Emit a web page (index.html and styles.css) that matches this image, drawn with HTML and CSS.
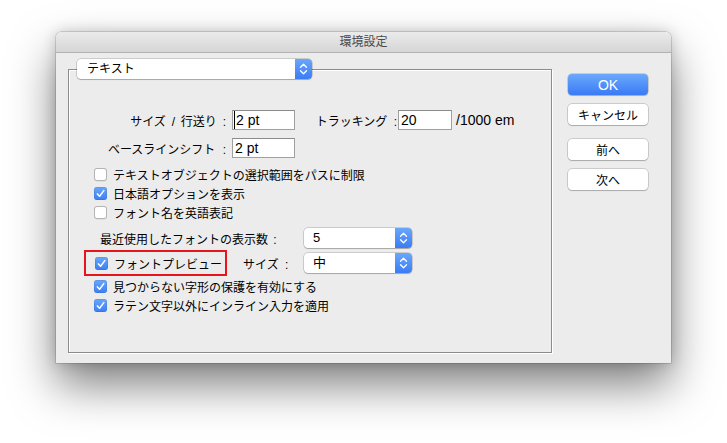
FILE: index.html
```html
<!DOCTYPE html>
<html lang="ja">
<head>
<meta charset="utf-8">
<title>環境設定</title>
<link rel="stylesheet" href="styles.css">
</head>
<body>
<div class="window">
  <div class="titlebar">環境設定</div>
  <div class="body">
    <fieldset class="group">
      <legend class="popup legend-popup">
        <span class="popup-label">テキスト</span>
        <span class="popup-arrows"><svg width="17" height="20" viewBox="0 0 17 20"><path d="M5.5 8.2 L8.5 5.2 L11.5 8.2 M5.5 11.8 L8.5 14.8 L11.5 11.8" fill="none" stroke="#fff" stroke-width="1.3" stroke-linecap="round" stroke-linejoin="round"/></svg></span>
      </legend>
      <div class="field-row first">
        <span class="flabel wide-spaces">サイズ / 行送り :</span>
        <span class="tf caret">2 pt</span>
        <span class="flabel2">トラッキング :</span>
        <span class="tf tf-narrow">20</span>
        <span class="unit">/1000 em</span>
      </div>
      <div class="field-row second">
        <span class="flabel">ベースラインシフト :</span>
        <span class="tf">2 pt</span>
      </div>
      <div class="checks">
        <div class="check-row"><span class="cb"></span>テキストオブジェクトの選択範囲をパスに制限</div>
        <div class="check-row"><span class="cb on"><svg width="13" height="13" viewBox="0 0 13 13"><path d="M3.4 6.9 L5.6 9.3 L9.8 3.6" fill="none" stroke="#fff" stroke-width="1.5" stroke-linecap="round" stroke-linejoin="round"/></svg></span>日本語オプションを表示</div>
        <div class="check-row"><span class="cb"></span>フォント名を英語表記</div>
      </div>
      <div class="sel-row recent">
        <span class="recent-label">最近使用したフォントの表示数 :</span>
        <span class="popup sel">
          <span class="popup-label sel-label">5</span>
          <span class="popup-arrows"><svg width="17" height="20" viewBox="0 0 17 20"><path d="M5.5 8.2 L8.5 5.2 L11.5 8.2 M5.5 11.8 L8.5 14.8 L11.5 11.8" fill="none" stroke="#fff" stroke-width="1.3" stroke-linecap="round" stroke-linejoin="round"/></svg></span>
        </span>
      </div>
      <div class="sel-row preview">
        <span class="highlight"><span class="cb on"><svg width="13" height="13" viewBox="0 0 13 13"><path d="M3.4 6.9 L5.6 9.3 L9.8 3.6" fill="none" stroke="#fff" stroke-width="1.5" stroke-linecap="round" stroke-linejoin="round"/></svg></span>フォントプレビュー</span>
        <span class="size-label">サイズ :</span>
        <span class="popup sel">
          <span class="popup-label sel-label">中</span>
          <span class="popup-arrows"><svg width="17" height="20" viewBox="0 0 17 20"><path d="M5.5 8.2 L8.5 5.2 L11.5 8.2 M5.5 11.8 L8.5 14.8 L11.5 11.8" fill="none" stroke="#fff" stroke-width="1.3" stroke-linecap="round" stroke-linejoin="round"/></svg></span>
        </span>
      </div>
      <div class="checks last">
        <div class="check-row"><span class="cb on"><svg width="13" height="13" viewBox="0 0 13 13"><path d="M3.4 6.9 L5.6 9.3 L9.8 3.6" fill="none" stroke="#fff" stroke-width="1.5" stroke-linecap="round" stroke-linejoin="round"/></svg></span>見つからない字形の保護を有効にする</div>
        <div class="check-row"><span class="cb on"><svg width="13" height="13" viewBox="0 0 13 13"><path d="M3.4 6.9 L5.6 9.3 L9.8 3.6" fill="none" stroke="#fff" stroke-width="1.5" stroke-linecap="round" stroke-linejoin="round"/></svg></span>ラテン文字以外にインライン入力を適用</div>
      </div>
    </fieldset>
    <div class="buttons">
      <button class="btn primary">OK</button>
      <button class="btn">キャンセル</button>
      <button class="btn gap">前へ</button>
      <button class="btn">次へ</button>
    </div>
  </div>
</div>
</body>
</html>
```

FILE: styles.css
```css
* { box-sizing: border-box; }

html { background: #fff; }

body {
  margin: 0;
  min-height: 443px;
  padding: 32px 0 0 56px;
  background: #fff;
  font-family: "Liberation Sans", "Noto Sans CJK JP", sans-serif;
  color: #111;
}

.window {
  width: 615px;
  height: 331px;
  background: #ececec;
  border-radius: 5px 5px 0 0;
  box-shadow: 0 0 0 0.5px rgba(0,0,0,0.25), 0 22px 45px rgba(0,0,0,0.5), 0 0 14px rgba(0,0,0,0.18);
  display: flex;
  flex-direction: column;
}

.titlebar {
  height: 21px;
  flex: none;
  background: linear-gradient(#ebebeb, #d5d5d5);
  border-bottom: 1px solid #b2b2b2;
  border-radius: 5px 5px 0 0;
  text-align: center;
  font-size: 12px;
  line-height: 21px;
  color: #4a4a4a;
}

.body {
  flex: 1;
  display: flex;
  padding: 6px 23px 10px 12px;
}

.group {
  margin: 0;
  padding: 0;
  width: 484px;
  height: 294px;
  min-width: 0;
  border: 1px solid #8c8c8c;
  box-shadow: 1px 1px 0 #fff, inset 1px 1px 0 #fff;
}

.popup {
  display: flex;
  height: 20px;
  background: #fff;
  border-radius: 4px;
  box-shadow: 0 0 0 0.5px rgba(0,0,0,0.28), 0 1px 1px rgba(0,0,0,0.18);
}

.legend-popup {
  margin-left: 8px;
  padding: 0;
  width: 235px;
}

.popup-label {
  flex: 1;
  padding-left: 10px;
  font-size: 12px;
  line-height: 20px;
  color: #000;
}

.popup-arrows {
  width: 17px;
  height: 20px;
  flex: none;
  border-radius: 0 4px 4px 0;
  background: linear-gradient(#6aa7fb, #3a7cf5);
  display: flex;
}

.field-row {
  display: flex;
  align-items: center;
  font-size: 12px;
  color: #000;
  white-space: nowrap;
}

.field-row.first { margin-top: 31px; }
.field-row.second { margin-top: 8px; }

.flabel {
  flex: none;
  width: 157px;
  text-align: right;
  margin-right: 6px;
  word-spacing: 4px;
  white-space: nowrap;
}

.flabel.wide-spaces { word-spacing: 2.5px; }

.flabel2 {
  flex: none;
  width: 82px;
  margin-left: 20px;
  margin-right: 1px;
  text-align: right;
  word-spacing: 3px;
  white-space: nowrap;
}

.tf {
  flex: none;
  width: 63px;
  height: 20px;
  background: #fff;
  border: 1px solid #a0a0a0;
  border-top-color: #8c8c8c;
  font-family: "Liberation Sans", sans-serif;
  font-size: 14px;
  line-height: 18px;
  padding-left: 2px;
  color: #000;
}

.tf.caret { box-shadow: inset 1px 0 0 #fff, inset 2px 0 0 #000; padding-left: 3px; }

.tf-narrow { width: 54px; }

.unit {
  margin-left: 4px;
  font-size: 14px;
  font-family: "Liberation Sans", sans-serif;
}

.checks { margin-top: 7px; padding-left: 25px; }
.checks.last { margin-top: 1px; }

.check-row {
  height: 19px;
  display: flex;
  align-items: center;
  font-size: 12px;
  color: #000;
  white-space: nowrap;
}

.cb {
  width: 13px;
  height: 13px;
  flex: none;
  border-radius: 3px;
  background: #fff;
  box-shadow: inset 0 0 0 1px #b4b4b4, 0 0.5px 0.5px rgba(0,0,0,0.1);
  margin-right: 6px;
  display: flex;
}

.cb.on {
  background: linear-gradient(#6aa7fb, #3b7ef6);
  box-shadow: inset 0 0 0 0.5px rgba(0,0,0,0.15);
}

.sel-row {
  display: flex;
  align-items: center;
  font-size: 12px;
  color: #000;
  white-space: nowrap;
}

.sel-row.recent { margin-top: 6px; padding-left: 31px; }
.sel-row.preview { margin-top: 2px; padding-left: 15px; }

.recent-label { flex: none; width: 204px; word-spacing: 2px; }

.sel { flex: none; width: 108px; }
.sel-label { padding-left: 9px; font-size: 13px; }

.highlight {
  flex: none;
  width: 143px;
  height: 26px;
  border: 2px solid #e8141b;
  display: flex;
  align-items: center;
  padding-left: 9px;
}

.size-label {
  flex: none;
  width: 61px;
  margin-left: 16px;
  word-spacing: 3px;
}

.buttons {
  display: flex;
  flex-direction: column;
  margin-left: 16px;
  padding-top: 15px;
}

.btn {
  width: 80px;
  height: 21px;
  margin: 0 0 9px 0;
  padding: 0;
  border: none;
  background: #fff;
  border-radius: 4px;
  box-shadow: 0 0 0 0.5px rgba(0,0,0,0.28), 0 1px 1px rgba(0,0,0,0.16);
  font-family: "Liberation Sans", "Noto Sans CJK JP", sans-serif;
  font-size: 12px;
  color: #000;
}

.btn.gap { margin-top: 5px; }

.btn.primary {
  background: linear-gradient(#6ba9fc, #3a7af6);
  color: #fff;
  font-size: 14px;
}
```
